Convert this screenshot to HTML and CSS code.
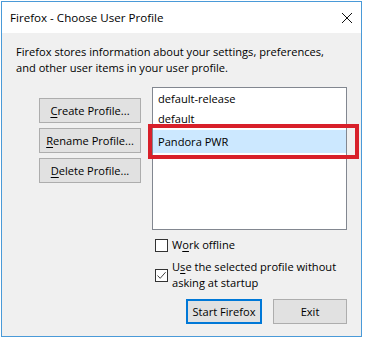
FILE: index.html
```html
<!DOCTYPE html>
<html>
<head>
<meta charset="utf-8">
<link rel="stylesheet" href="styles.css">
</head>
<body>
<div class="window">
  <div class="titlebar">
    <span class="title">Firefox - Choose User Profile</span>
    <svg class="close" width="12" height="12" viewBox="0 0 12 12"><path d="M1 1 L11 11 M11 1 L1 11" stroke="#111" stroke-width="1" fill="none"/></svg>
  </div>
  <div class="content">
    <p class="intro">Firefox stores information about your settings, preferences,<br>and other user items in your user profile.</p>
    <div class="main">
      <div class="actions">
        <button class="btn side"><u>C</u>reate Profile...</button>
        <button class="btn side"><u>R</u>ename Profile...</button>
        <button class="btn side"><u>D</u>elete Profile...</button>
      </div>
      <div class="right">
        <div class="listbox">
          <div class="item">default-release</div>
          <div class="item">default</div>
          <div class="item selected">Pandora PWR</div>
          <div class="highlight"></div>
        </div>
        <label class="check">
          <span class="box"></span>
          <span class="label">W<u>o</u>rk offline</span>
        </label>
        <label class="check two">
          <span class="box"><svg width="11" height="11" viewBox="0 0 11 11"><path d="M1.5 5.5 L4.2 8.3 L9.6 2.2" stroke="#444" stroke-width="1" fill="none"/></svg></span>
          <span class="label">U<u>s</u>e the selected profile without<br>asking at startup</span>
        </label>
        <div class="bottom">
          <button class="btn default">Start Firefox</button>
          <button class="btn exit">Exit</button>
        </div>
      </div>
    </div>
  </div>
</div>
</body>
</html>
```
FILE: styles.css
```css
html, body {
  margin: 0;
  padding: 0;
  background: #ffffff;
}
body {
  font-family: "Open Sans", "Noto Sans", "Liberation Sans", sans-serif;
  font-size: 11.1px;
  color: #000;
  width: 365px;
  height: 340px;
  overflow: hidden;
}
.window {
  margin: 1px 0 0 1px;
  width: 359px;
  height: 334px;
  border: 1px solid #4a9ad8;
  background: #f0f0f0;
  display: flex;
  flex-direction: column;
}
.titlebar {
  height: 31px;
  background: #ffffff;
  display: flex;
  align-items: center;
  padding-left: 8px;
  position: relative;
  flex-shrink: 0;
}
.title {
  font-size: 11.6px;
  color: #000;
}
.close {
  position: absolute;
  left: 339px;
  top: 10px;
}
.content {
  padding: 11px 0 0 14px;
}
.intro {
  margin: 0;
  line-height: 16px;
  font-size: 11.1px;
}
.main {
  display: flex;
  margin-top: 11px;
}
.actions {
  display: flex;
  flex-direction: column;
  gap: 5px;
  padding-top: 11px;
  margin-left: 23px;
  width: 102px;
}
.btn {
  font-family: inherit;
  font-size: 11.1px;
  background: #e1e1e1;
  border: 1px solid #adadad;
  color: #000;
  height: 25px;
  padding: 0;
  margin: 0;
  line-height: 1;
}
.btn u {
  text-decoration-thickness: 1px;
  text-underline-offset: 2px;
}
.side {
  width: 102px;
}
.right {
  margin-left: 11px;
  width: 196px;
  display: flex;
  flex-direction: column;
}
.listbox {
  position: relative;
  width: 193px;
  height: 140px;
  border: 1px solid #828790;
  background: #ffffff;
  padding-top: 1px;
}
.item {
  height: 20px;
  line-height: 20px;
  padding-left: 5px;
  font-size: 11.1px;
}
.item.selected {
  background: #cce8ff;
  margin-top: 1px;
  height: 23px;
  line-height: 23px;
}
.highlight {
  position: absolute;
  left: -5px;
  top: 36px;
  width: 203px;
  height: 27px;
  border: 4px solid #d8202a;
}
.check {
  display: flex;
  align-items: center;
  margin-top: 7px;
  padding-left: 3px;
  line-height: 16px;
}
.check.two {
  margin-top: 6px;
}
.box {
  width: 11px;
  height: 11px;
  border: 1px solid #333333;
  background: #ffffff;
  margin-right: 4px;
  flex-shrink: 0;
  display: flex;
}
.label u {
  text-underline-offset: 2px;
}
.bottom {
  display: flex;
  justify-content: flex-end;
  gap: 11px;
  margin-top: 8px;
  padding-right: 1px;
}
.default {
  width: 76px;
  border: 2px solid #0078d7;
}
.exit {
  width: 74px;
}
```
